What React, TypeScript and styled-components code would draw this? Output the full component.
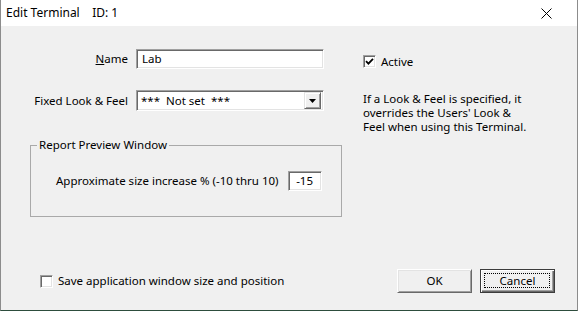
import React from "react";
import styled, { createGlobalStyle } from "styled-components";

const Global = createGlobalStyle`
  html, body { margin: 0; padding: 0; background: #f0f0f0; }
  body { font-family: "Noto Sans", "Segoe UI", sans-serif; font-size: 11.5px; line-height: 14px; color: #000; }
  * { box-sizing: border-box; }
`;

const Window = styled.div`
  width: 578px;
  height: 311px;
  display: flex;
  flex-direction: column;
  border-left: 1px solid #8c8c8c;
  border-right: 1px solid #8c8c8c;
  border-bottom: 1px solid #2d4d3d;
  background: #f0f0f0;
`;

const TitleBar = styled.div`
  height: 26px;
  flex: none;
  background: #fff;
  display: flex;
  align-items: center;
  justify-content: space-between;
  padding: 0 25px 0 5px;
`;

const Title = styled.span`
  font-family: "Noto Sans", "Segoe UI", sans-serif;
  font-size: 12px;
  white-space: pre;
  color: #000;
`;

const Body = styled.div`
  flex: 1;
  display: flex;
  flex-direction: column;
  padding: 23px 22px 17px 29px;
`;

const TopSection = styled.div`
  display: flex;
  align-items: flex-start;
  gap: 21px;
`;

const LeftCol = styled.div`
  display: flex;
  flex-direction: column;
`;

const FormGrid = styled.div`
  display: grid;
  grid-template-columns: 98px 188px;
  grid-template-rows: 20px 21px;
  column-gap: 8px;
  row-gap: 21px;
  align-items: center;
`;

const Label = styled.label`
  text-align: right;
  white-space: nowrap;
  u { text-decoration: underline; }
`;

const sunken = `
  background: #fff;
  border-top: 1px solid #a0a0a0;
  border-left: 1px solid #a0a0a0;
  border-bottom: 1px solid #fff;
  border-right: 1px solid #fff;
  box-shadow: inset 1px 1px 0 #696969, inset -1px -1px 0 #e3e3e3;
`;

const TextBox = styled.div<{ $w?: number; $align?: string }>`
  ${sunken}
  height: 20px;
  width: ${(p) => (p.$w ? `${p.$w}px` : "100%")};
  display: flex;
  align-items: center;
  justify-content: ${(p) => p.$align || "flex-start"};
  padding: 0 5px;
  white-space: pre;
`;

const Select = styled.div`
  ${sunken}
  height: 21px;
  display: flex;
  align-items: center;
  justify-content: space-between;
  padding: 2px 2px 2px 4px;
  white-space: pre;
`;

const DropButton = styled.div`
  width: 17px;
  height: 17px;
  background: #f0f0f0;
  border-top: 1px solid #e3e3e3;
  border-left: 1px solid #e3e3e3;
  border-bottom: 1px solid #696969;
  border-right: 1px solid #696969;
  box-shadow: inset 1px 1px 0 #fff, inset -1px -1px 0 #a0a0a0;
  display: flex;
  align-items: center;
  justify-content: center;
`;

const RightCol = styled.div`
  display: flex;
  flex-direction: column;
  padding-top: 6px;
`;

const CheckRow = styled.div`
  display: flex;
  align-items: center;
  gap: 5px;
  height: 13px;
  white-space: nowrap;
`;

const CheckBox = styled.div`
  width: 13px;
  height: 13px;
  ${sunken}
  flex: none;
  display: flex;
  align-items: center;
  justify-content: center;
`;

const Info = styled.div`
  margin-top: 24px;
  width: 172px;
  line-height: 14px;
`;

const GroupBox = styled.fieldset`
  margin: 27px 0 0 0;
  width: 312px;
  border: 1px solid #a9a9a9;
  padding: 0 6px 25px 6px;
  min-width: 0;
`;

const Legend = styled.legend`
  padding: 0 2px;
  line-height: 14px;
`;

const GroupRow = styled.div`
  display: flex;
  align-items: center;
  gap: 9px;
  margin-top: 19px;
  padding-left: 19px;
  white-space: nowrap;
`;

const BottomRow = styled.div`
  margin-top: auto;
  display: flex;
  align-items: center;
  padding-left: 10px;
`;

const Buttons = styled.div`
  margin-left: auto;
  display: flex;
  gap: 8px;
`;

const Button = styled.div<{ $default?: boolean }>`
  width: 75px;
  height: 24px;
  background: #f0f0f0;
  display: flex;
  align-items: center;
  justify-content: center;
  position: relative;
  ${(p) =>
    p.$default
      ? `
    border: 1px solid #3c3c3c;
    box-shadow: inset 1px 1px 0 #fff, inset -1px -1px 0 #696969, inset -2px -2px 0 #a0a0a0;
  `
      : `
    border-top: 1px solid #fff;
    border-left: 1px solid #fff;
    border-bottom: 1px solid #696969;
    border-right: 1px solid #696969;
    box-shadow: inset 1px 1px 0 #e3e3e3, inset -1px -1px 0 #a0a0a0;
  `}
`;

const FocusRect = styled.span`
  position: absolute;
  inset: 3px 4px 4px 3px;
  border: 1px dotted #000;
  pointer-events: none;
`;

export default function App() {
  return (
    <>
      <Global />
      <Window>
        <TitleBar>
          <Title>{"Edit Terminal    ID: 1"}</Title>
          <svg width="11" height="11" viewBox="0 0 11 11">
            <path d="M0.5 0.5 L10.5 10.5 M10.5 0.5 L0.5 10.5" stroke="#000" strokeWidth="1" />
          </svg>
        </TitleBar>
        <Body>
          <TopSection>
            <LeftCol>
              <FormGrid>
                <Label>
                  <u>N</u>ame
                </Label>
                <TextBox>Lab</TextBox>
                <Label>Fixed Look &amp; Feel</Label>
                <Select>
                  <span>{"***  Not set  ***"}</span>
                  <DropButton>
                    <svg width="7" height="4" viewBox="0 0 7 4">
                      <path d="M0 0 H7 L3.5 4 Z" fill="#000" />
                    </svg>
                  </DropButton>
                </Select>
              </FormGrid>
              <GroupBox>
                <Legend>Report Preview Window</Legend>
                <GroupRow>
                  <span>Approximate size increase % (-10 thru 10)</span>
                  <TextBox $w={34} $align="center">-15</TextBox>
                </GroupRow>
              </GroupBox>
            </LeftCol>
            <RightCol>
              <CheckRow>
                <CheckBox>
                  <svg width="9" height="9" viewBox="0 0 9 9">
                    <path d="M1 4.2 L3.4 6.6 L8 1.8" stroke="#000" strokeWidth="1.8" fill="none" />
                  </svg>
                </CheckBox>
                <span>Active</span>
              </CheckRow>
              <Info>
                If a Look &amp; Feel is specified, it overrides the Users' Look &amp; Feel when using this Terminal.
              </Info>
            </RightCol>
          </TopSection>
          <BottomRow>
            <CheckRow>
              <CheckBox />
              <span>Save application window size and position</span>
            </CheckRow>
            <Buttons>
              <Button>OK</Button>
              <Button $default>
                Cancel
                <FocusRect />
              </Button>
            </Buttons>
          </BottomRow>
        </Body>
      </Window>
    </>
  );
}
